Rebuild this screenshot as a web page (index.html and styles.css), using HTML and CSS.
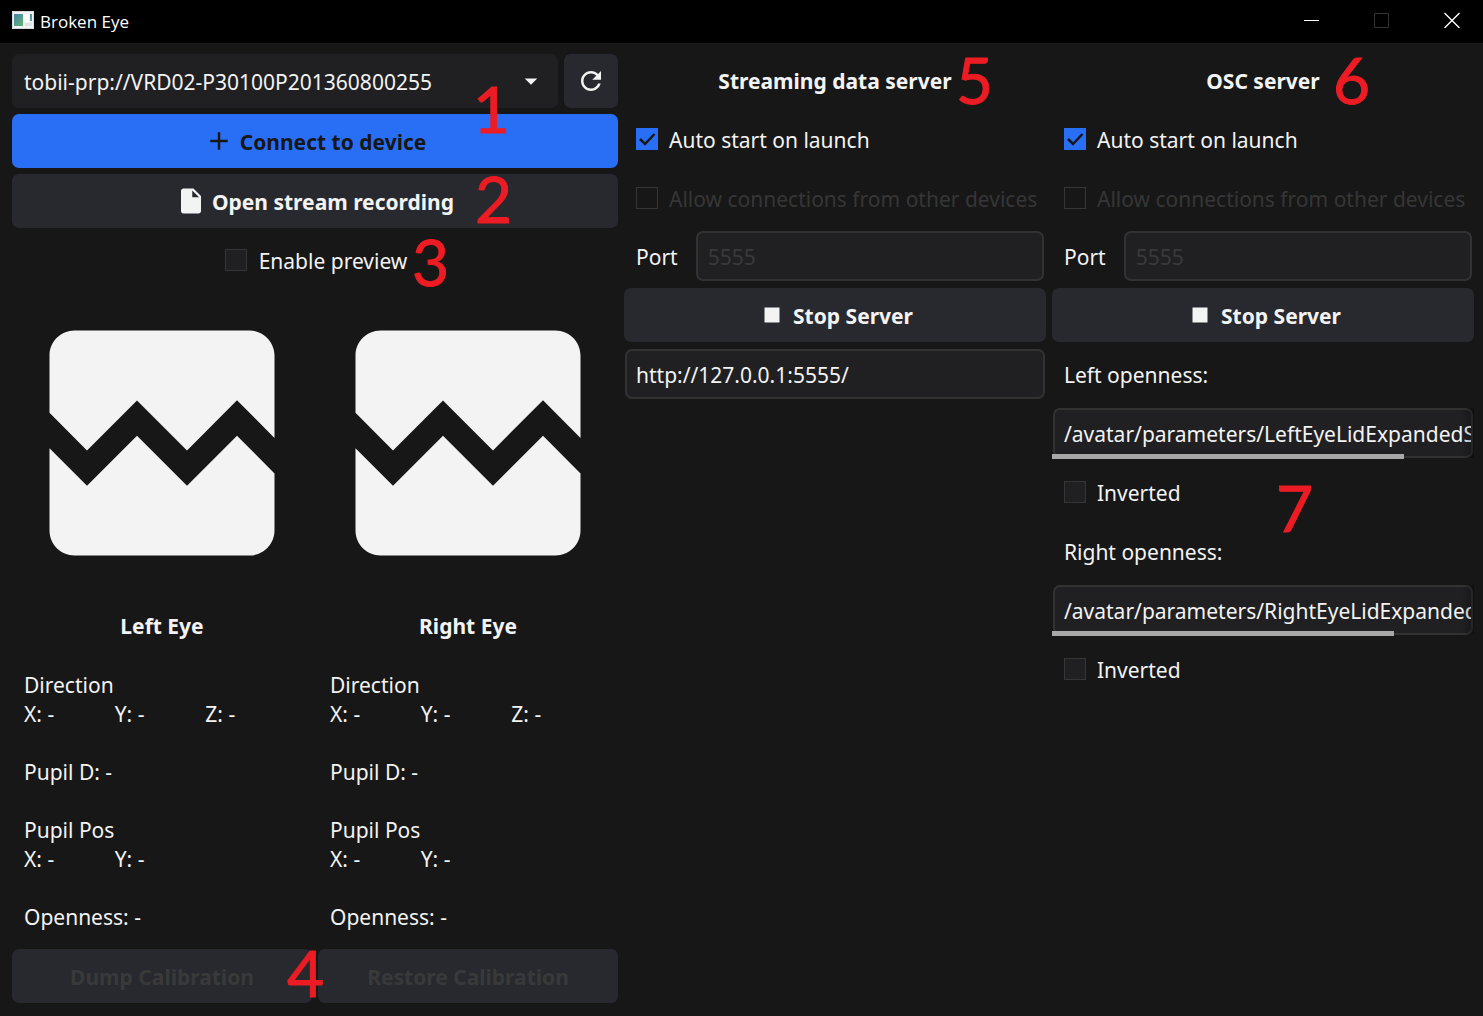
FILE: index.html
```html
<!DOCTYPE html>
<html lang="en">
<head>
<meta charset="utf-8">
<title>Broken Eye</title>
<link rel="stylesheet" href="styles.css">
</head>
<body>
<svg class="defs" aria-hidden="true">
  <symbol id="broken" viewBox="0 0 24 24"><path d="M21 5v6.59l-3-3.01-4 4.01-4-4-4 4-3-3.01V5c0-1.1.9-2 2-2h14c1.1 0 2 .9 2 2zm-3 6.42l3 3.01V19c0 1.1-.9 2-2 2H5c-1.1 0-2-.9-2-2v-6.58l3 2.99 4-4 4 4 4-3.99z"/></symbol>
  <symbol id="stop" viewBox="0 0 24 24"><path d="M6 6h12v12H6z"/></symbol>
</svg>
<header class="titlebar">
  <svg class="app-icon" viewBox="0 0 22 18" aria-hidden="true">
    <defs><linearGradient id="pane" x1="0" y1="0" x2="1" y2="1"><stop offset="0" stop-color="#4a7fae"/><stop offset="1" stop-color="#62b66d"/></linearGradient></defs>
    <rect width="22" height="18" fill="#d5d7d9"/><rect x="1" y="1" width="20" height="16" fill="#f1f2f3"/>
    <rect x="2" y="3" width="9" height="12" fill="url(#pane)"/><rect x="12" y="3" width="5" height="8" fill="#fff"/><rect x="18" y="3" width="2" height="7" fill="url(#pane)"/><rect x="13" y="12" width="7" height="3" fill="#dfe2e2"/>
  </svg>
  <h1 class="title">Broken Eye</h1>
  <div class="window-controls">
    <button class="win-btn" aria-label="Minimize"><svg viewBox="0 0 16 16"><path d="M0 8.500h15"/></svg></button>
    <button class="win-btn win-off" aria-label="Maximize" disabled><svg viewBox="0 0 16 16"><path d="M.5 1.500h14v14H.5z"/></svg></button>
    <button class="win-btn win-close" aria-label="Close"><svg viewBox="0 0 16 16"><path d="M.5 1l15 15M15.500 1l-15 15"/></svg></button>
  </div>
</header>
<main class="columns">
  <section class="column">
    <div class="device-row">
      <div class="select-box">
        <select class="select" aria-label="Device"><option>tobii-prp://VRD02-P30100P201360800255</option></select>
        <svg class="icon select-arrow" viewBox="0 0 24 24"><path d="M7 10l5 5 5-5z"/></svg>
      </div>
      <button class="btn btn-square" aria-label="Refresh"><svg class="icon" viewBox="0 0 24 24"><path d="M17.650 6.350C16.200 4.900 14.210 4 12 4c-4.420 0-7.990 3.580-7.990 8s3.570 8 7.990 8c3.730 0 6.840-2.550 7.730-6h-2.080c-.82 2.330-3.040 4-5.650 4-3.310 0-6-2.690-6-6s2.690-6 6-6c1.660 0 3.140.69 4.220 1.780L13 11h7V4l-2.350 2.350z"/></svg></button>
    </div>
    <button class="btn btn-primary"><svg class="icon" viewBox="0 0 24 24"><path d="M19 13h-6v6h-2v-6H5v-2h6V5h2v6h6v2z"/></svg>Connect to device</button>
    <button class="btn"><svg class="icon" viewBox="0 0 24 24"><path d="M6 2c-1.100 0-1.990.9-1.990 2L4 20c0 1.100.89 2 1.990 2H18c1.100 0 2-.9 2-2V8l-6-6H6zm7 7V3.500L18.500 9H13z"/></svg>Open stream recording</button>
    <label class="check check-center"><input type="checkbox">Enable preview</label>
    <div class="eyes">
      <section class="eye">
        <svg class="eye-image" aria-hidden="true"><use href="#broken"/></svg>
        <h2 class="heading">Left Eye</h2>
        <div class="readings">
          <div><p>Direction</p><div class="axes"><span>X: -</span><span>Y: -</span><span>Z: -</span></div></div>
          <p>Pupil D: -</p>
          <div><p>Pupil Pos</p><div class="axes"><span>X: -</span><span>Y: -</span></div></div>
          <p>Openness: -</p>
        </div>
        <button class="btn" disabled>Dump Calibration</button>
      </section>
      <section class="eye">
        <svg class="eye-image" aria-hidden="true"><use href="#broken"/></svg>
        <h2 class="heading">Right Eye</h2>
        <div class="readings">
          <div><p>Direction</p><div class="axes"><span>X: -</span><span>Y: -</span><span>Z: -</span></div></div>
          <p>Pupil D: -</p>
          <div><p>Pupil Pos</p><div class="axes"><span>X: -</span><span>Y: -</span></div></div>
          <p>Openness: -</p>
        </div>
        <button class="btn" disabled>Restore Calibration</button>
      </section>
    </div>
  </section>

  <section class="column">
    <h2 class="heading">Streaming data server</h2>
    <label class="check"><input type="checkbox" checked>Auto start on launch</label>
    <label class="check check-off"><input type="checkbox" disabled>Allow connections from other devices</label>
    <div class="port-row"><label for="port-stream">Port</label><input class="entry" id="port-stream" value="5555" disabled></div>
    <button class="btn"><svg class="icon" aria-hidden="true"><use href="#stop"/></svg>Stop Server</button>
    <div class="field"><input class="entry" aria-label="Server address" value="http://127.0.0.1:5555/"></div>
  </section>

  <section class="column">
    <h2 class="heading">OSC server</h2>
    <label class="check"><input type="checkbox" checked>Auto start on launch</label>
    <label class="check check-off"><input type="checkbox" disabled>Allow connections from other devices</label>
    <div class="port-row"><label for="port-osc">Port</label><input class="entry" id="port-osc" value="5555" disabled></div>
    <button class="btn"><svg class="icon" aria-hidden="true"><use href="#stop"/></svg>Stop Server</button>
    <label class="label" for="left-path">Left openness:</label>
    <div class="field field-scroll"><input class="entry" id="left-path" value="/avatar/parameters/LeftEyeLidExpandedSqueeze"><span class="scrollbar" style="width:83.4%"></span></div>
    <label class="check"><input type="checkbox">Inverted</label>
    <label class="label" for="right-path">Right openness:</label>
    <div class="field field-scroll"><input class="entry" id="right-path" value="/avatar/parameters/RightEyeLidExpandedSqueeze"><span class="scrollbar" style="width:81%"></span></div>
    <label class="check"><input type="checkbox">Inverted</label>
  </section>
</main>
<span class="mark mark-1">1</span>
<span class="mark mark-2">2</span>
<span class="mark mark-3">3</span>
<span class="mark mark-4">4</span>
<span class="mark mark-5">5</span>
<span class="mark mark-6">6</span>
<span class="mark mark-7">7</span>
</body>
</html>
```
FILE: styles.css
```css
* { box-sizing: border-box; }

body {
  position: relative;
  min-height: 100vh;
  margin: 0;
  background: #171717;
  color: #f3f3f3;
  font: 21px/29px "Noto Sans", sans-serif;
}

h1, h2, p { margin: 0; }
button, input, select { font: inherit; color: inherit; }
.defs { position: absolute; width: 0; height: 0; }

/* Window title bar */
.titlebar {
  display: flex;
  align-items: center;
  height: 43px;
  padding-left: 12px;
  background: #000;
}
.app-icon { width: 22px; height: 18px; margin-bottom: 3px; }
.title {
  margin-left: 6px;
  font: 17px/43px "Open Sans", sans-serif;
  color: #fff;
}
.window-controls { display: flex; margin-left: auto; }
.win-btn {
  display: flex;
  align-items: center;
  justify-content: center;
  width: 70px;
  height: 43px;
  padding: 0 0 4px 8px;
  border: 0;
  background: none;
}
.win-btn svg { width: 16px; height: 16px; fill: none; stroke: #fff; }
.win-off svg { stroke: #333; }
.win-close svg { stroke-width: 1.4; }

/* Layout */
.columns {
  display: grid;
  grid-template-columns: 606fr 422fr 422fr;
  gap: 6px;
  padding: 11px 9px 13px 12px;
}
.column, .eye {
  display: flex;
  flex-direction: column;
  gap: 6px;
  min-width: 0;
}
.device-row { display: flex; gap: 6px; }
.eyes { display: grid; grid-template-columns: 1fr 1fr; gap: 6px; }

/* Buttons and icons */
.icon { width: 30px; height: 30px; fill: currentColor; flex: none; margin-bottom: 2px; }
.btn {
  display: flex;
  align-items: center;
  justify-content: center;
  gap: 6px;
  height: 54px;
  padding: 2px 0 0;
  border: 0;
  border-radius: 7px;
  background: #28292e;
  font-weight: 700;
}
.btn:disabled { color: #39393a; }
.btn-primary { background: #296ff6; color: #171717; }
.btn-square { width: 54px; flex: none; }

.select-box { position: relative; flex: 1; }
.select {
  width: 100%;
  height: 54px;
  padding: 2px 48px 0 12px;
  border: 0;
  border-radius: 7px;
  appearance: none;
  background: #202022;
}
.select-arrow { position: absolute; right: 12px; top: 12px; pointer-events: none; }

/* Labels and tick boxes */
.heading {
  padding: 1px 0 0;
  font-size: 21px;
  line-height: 52px;
  text-align: center;
}
.label { height: 53px; padding-left: 12px; line-height: 55px; }
.check {
  display: flex;
  align-items: center;
  gap: 11px;
  height: 53px;
  padding: 2px 0 0 12px;
}
.check-center { justify-content: center; gap: 12px; padding: 2px 0 0 2px; }
.check-off { color: #363636; }
.check input {
  width: 22px;
  height: 22px;
  margin: 0 0 4px;
  flex: none;
  appearance: none;
  border: 1px solid #363636;
  background: #202022;
}
.check input:disabled { background: none; }
.check input:checked {
  border-color: #296ff6;
  background: #296ff6 url("data:image/svg+xml,%3Csvg xmlns='http://www.w3.org/2000/svg' viewBox='0 0 20 20'%3E%3Cpath d='M3 10l5 5L17.500 5' fill='none' stroke='%23171717' stroke-width='2.500'/%3E%3C/svg%3E") center / 20px 20px no-repeat;
}

/* Text entries */
.entry {
  width: 100%;
  min-width: 0;
  height: 50px;
  padding: 2px 10px 0;
  border: 2px solid #323233;
  border-radius: 7px;
  background: #202022;
}
.entry:disabled { color: #39393a; }
.port-row {
  display: flex;
  gap: 18px;
  height: 51px;
  padding: 0 2px 0 12px;
  line-height: 53px;
}
.field { position: relative; height: 53px; padding: 1px 1px 0; }
.field .entry { padding-left: 9px; }
.field-scroll .entry { padding-right: 0; }
.field-scroll::after {
  content: "";
  position: absolute;
  top: 1px;
  right: 0;
  width: 12px;
  height: 50px;
  background: linear-gradient(to right, transparent, rgba(0, 0, 0, .3));
}
.scrollbar {
  position: absolute;
  left: 0;
  top: 47px;
  height: 5px;
  background: #a8a8a8;
}

/* Eye panels */
.eye-image { align-self: center; width: 300px; height: 300px; fill: #f3f3f3; }
.readings {
  display: flex;
  flex-direction: column;
  gap: 29px;
  padding: 13px 16px 11px 12px;
}
.axes { display: grid; grid-template-columns: repeat(3, 1fr); }

/* Numbered callouts drawn over the window */
.mark {
  position: absolute;
  width: 37px;
  color: #ed1c24;
  font: 64px/64px Lato, sans-serif;
  -webkit-text-stroke: 1px #ed1c24;
  text-align: center;
  pointer-events: none;
}
.mark-1 { left: 473px; top: 77px; }
.mark-2 { left: 475px; top: 167px; }
.mark-3 { left: 412px; top: 230px; }
.mark-4 { left: 287px; top: 941px; }
.mark-5 { left: 956px; top: 48px; }
.mark-6 { left: 1333px; top: 48px; }
.mark-7 { left: 1276px; top: 476px; }
```
